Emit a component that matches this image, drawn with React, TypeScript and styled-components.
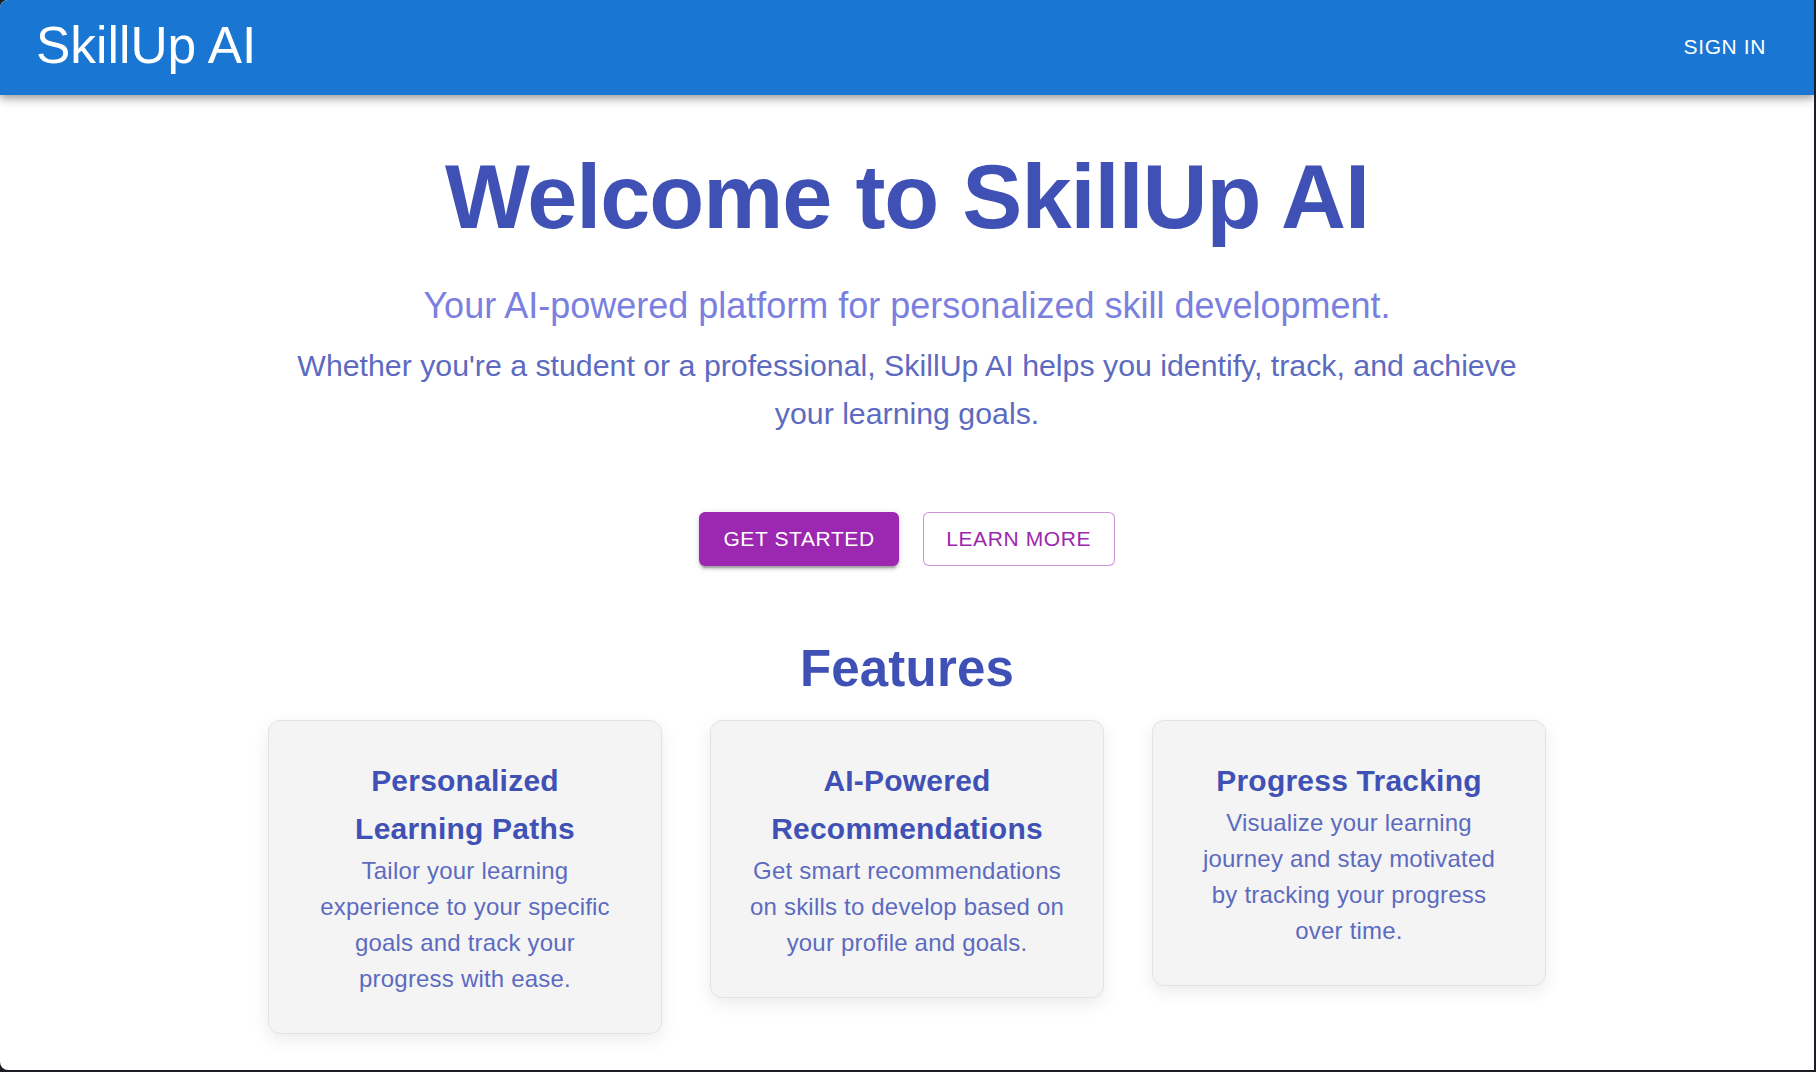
import React from 'react';
import styled, { createGlobalStyle } from 'styled-components';

const GlobalStyle = createGlobalStyle`
  html, body {
    margin: 0;
    padding: 0;
    background: #1d1d26;
  }
  body {
    font-family: 'Liberation Sans', Arial, Helvetica, sans-serif;
  }
  * {
    box-sizing: border-box;
  }
`;

const Frame = styled.div`
  width: 1814px;
  height: 1070px;
  background: #ffffff;
  border-radius: 8px 0 0 8px;
  overflow: hidden;
`;

const AppBar = styled.header`
  position: relative;
  z-index: 1;
  height: 95px;
  padding: 0 36px;
  display: flex;
  align-items: center;
  justify-content: space-between;
  background: #1976d2;
  color: #fff;
  box-shadow: 0 3px 6px -1px rgba(0, 0, 0, 0.2), 0 6px 7.5px 0 rgba(0, 0, 0, 0.14),
    0 1.5px 15px 0 rgba(0, 0, 0, 0.12);
`;

const Logo = styled.div`
  font-size: 51.5px;
  line-height: 1.235;
  font-weight: 400;
  margin-bottom: 3px;
`;

const NavButton = styled.button`
  background: transparent;
  border: none;
  color: #fff;
  font-family: inherit;
  font-size: 21px;
  font-weight: 500;
  letter-spacing: 0.6px;
  text-transform: uppercase;
  padding: 9px 12px;
  line-height: 1.75;
  cursor: pointer;
`;

const Main = styled.main`
  max-width: 1350px;
  margin: 0 auto;
  padding: 0 36px;
  text-align: center;
`;

const Heading = styled.h1`
  margin: 48px 0 31px;
  font-size: 90px;
  line-height: 108px;
  font-weight: 700;
  letter-spacing: -1px;
  color: #3f51b5;
`;

const Subtitle = styled.p`
  margin: 0 0 12px;
  font-size: 36px;
  line-height: 48px;
  color: #7b80e0;
`;

const Lead = styled.p`
  max-width: 1240px;
  margin: 0 auto;
  font-size: 30.3px;
  line-height: 48px;
  color: #5c6bc0;
`;

const ButtonRow = styled.div`
  margin-top: 74px;
  display: flex;
  justify-content: center;
  align-items: center;
  gap: 24px;
`;

const ActionButton = styled.button<{ $variant: 'contained' | 'outlined' }>`
  height: 54px;
  padding: 0 ${(p) => (p.$variant === 'contained' ? '24px' : '22.5px')};
  font-family: inherit;
  font-size: 21px;
  font-weight: 500;
  letter-spacing: 0.6px;
  text-transform: uppercase;
  border-radius: 6px;
  cursor: pointer;
  color: ${(p) => (p.$variant === 'contained' ? '#fff' : '#9c27b0')};
  background: ${(p) => (p.$variant === 'contained' ? '#9c27b0' : '#fff')};
  border: ${(p) =>
    p.$variant === 'contained' ? 'none' : '1.5px solid rgba(156, 39, 176, 0.5)'};
  box-shadow: ${(p) =>
    p.$variant === 'contained'
      ? '0 4.5px 1.5px -3px rgba(0,0,0,0.2), 0 3px 3px 0 rgba(0,0,0,0.14), 0 1.5px 7.5px 0 rgba(0,0,0,0.12)'
      : 'none'};
`;

const SectionTitle = styled.h2`
  margin: 71px 0 20px;
  font-size: 51px;
  line-height: 63px;
  font-weight: 700;
  letter-spacing: 0.2px;
  color: #3f51b5;
`;

const CardGrid = styled.div`
  display: grid;
  grid-template-columns: repeat(3, 1fr);
  gap: 48px;
  align-items: start;
`;

const Card = styled.div`
  padding: 36px;
  background: #f4f4f4;
  border: 1px solid #e3e3e3;
  border-radius: 12px;
  box-shadow: 0 6px 18px rgba(0, 0, 0, 0.08);
`;

const CardTitle = styled.h3`
  margin: 0;
  font-size: 30px;
  line-height: 48px;
  font-weight: 700;
  letter-spacing: 0.22px;
  color: #3f51b5;
`;

const CardText = styled.p`
  margin: 0;
  font-size: 24px;
  line-height: 36px;
  letter-spacing: 0.2px;
  color: #5c6bc0;
`;

const features = [
  {
    title: 'Personalized Learning Paths',
    text: 'Tailor your learning experience to your specific goals and track your progress with ease.',
  },
  {
    title: 'AI-Powered Recommendations',
    text: 'Get smart recommendations on skills to develop based on your profile and goals.',
  },
  {
    title: 'Progress Tracking',
    text: 'Visualize your learning journey and stay motivated by tracking your progress over time.',
  },
];

const App: React.FC = () => {
  return (
    <>
      <GlobalStyle />
      <Frame>
        <AppBar>
          <Logo>SkillUp AI</Logo>
          <NavButton>Sign In</NavButton>
        </AppBar>

        <Main>
          <Heading>Welcome to SkillUp AI</Heading>
          <Subtitle>Your AI-powered platform for personalized skill development.</Subtitle>
          <Lead>
            Whether you're a student or a professional, SkillUp AI helps you identify, track, and
            achieve your learning goals.
          </Lead>

          <ButtonRow>
            <ActionButton $variant="contained">Get Started</ActionButton>
            <ActionButton $variant="outlined">Learn More</ActionButton>
          </ButtonRow>

          <SectionTitle>Features</SectionTitle>
          <CardGrid>
            {features.map((f) => (
              <Card key={f.title}>
                <CardTitle>{f.title}</CardTitle>
                <CardText>{f.text}</CardText>
              </Card>
            ))}
          </CardGrid>
        </Main>
      </Frame>
    </>
  );
};

export default App;
